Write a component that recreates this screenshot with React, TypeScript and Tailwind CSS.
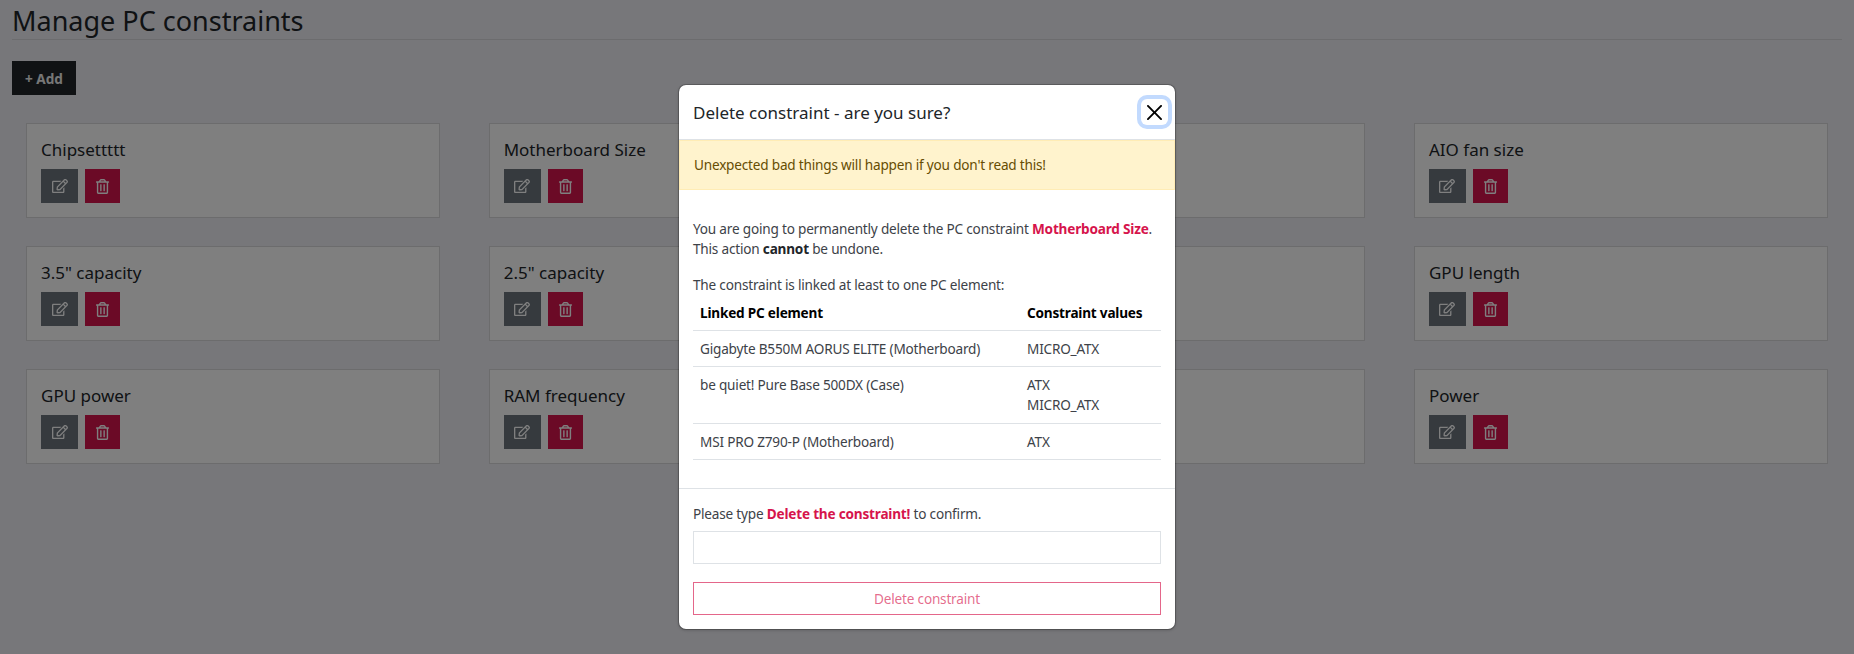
import { FaRegEdit, FaRegTrashAlt } from "react-icons/fa";

const constraints = [
  "Chipsettttt",
  "Motherboard Size",
  "CPU socket",
  "AIO fan size",
  '3.5" capacity',
  '2.5" capacity',
  "RAM type",
  "GPU length",
  "GPU power",
  "RAM frequency",
  "RAM size",
  "Power",
];

const linkedElements = [
  { name: "Gigabyte B550M AORUS ELITE (Motherboard)", values: ["MICRO_ATX"] },
  { name: "be quiet! Pure Base 500DX (Case)", values: ["ATX", "MICRO_ATX"] },
  { name: "MSI PRO Z790-P (Motherboard)", values: ["ATX"] },
];

export default function App() {
  return (
    <div className="relative h-[654px] overflow-hidden bg-[#eeeef4] font-['Noto_Sans',sans-serif] text-[13.6px] leading-[20.4px] text-[#212529]">
      {/* Page behind the modal */}
      <div className="px-3">
        <h1 className="h-10 border-b border-[#d8d8dc] pt-px text-[27px] leading-[40px] text-[#212529]">Manage PC constraints</h1>
        <button className="mt-[21px] flex h-[34px] w-16 items-center justify-center bg-[#212529] pt-[2px] text-[13.6px] font-bold text-[#eeeeee]">
          + Add
        </button>
        <div className="mt-7 grid grid-cols-4 gap-x-[48.67px] gap-y-7 px-[14px]">
          {constraints.map((name) => (
            <div key={name} className="h-[95px] border border-[#d8d8da] bg-white px-[14px] pt-[14px]">
              <h5 className="text-[17px] leading-[24px] text-[#212529]">{name}</h5>
              <div className="mt-[7px] flex gap-[7px]">
                <button className="flex h-[34px] w-[37px] items-center justify-center bg-[#6c757d] text-white">
                  <FaRegEdit size={16} />
                </button>
                <button className="flex h-[34px] w-[35px] items-center justify-center bg-[#d6144c] text-white">
                  <FaRegTrashAlt size={15} />
                </button>
              </div>
            </div>
          ))}
        </div>
      </div>

      {/* Backdrop */}
      <div className="absolute inset-0 bg-black/50" />

      {/* Modal */}
      <div className="absolute inset-0 flex justify-center pt-[84px]">
        <div className="h-[546px] w-[498px] rounded-lg border border-black/20 bg-white bg-clip-padding text-[#3d4248] shadow-sm">
          <div className="flex h-[55px] items-center justify-between border-b border-[#dee2e6] pl-[14px] pr-[7px]">
            <h5 className="pt-[2px] text-[17px] text-[#212529]">Delete constraint - are you sure?</h5>
            <button className="flex h-[26px] w-[27px] items-center justify-center rounded-md bg-white ring-4 ring-[#c2dafe]">
              <svg width="15" height="15" viewBox="0 0 16 16" fill="#000">
                <path d="M.293.293a1 1 0 0 1 1.414 0L8 6.586 14.293.293a1 1 0 1 1 1.414 1.414L9.414 8l6.293 6.293a1 1 0 0 1-1.414 1.414L8 9.414l-6.293 6.293a1 1 0 0 1-1.414-1.414L6.586 8 .293 1.707a1 1 0 0 1 0-1.414z" />
              </svg>
            </button>
          </div>
          <div className="flex h-[50px] items-center border border-[#ffecb5] bg-[#fff3cd] px-[14px] pt-px tracking-[-0.2px] text-[#664d03]">
            Unexpected bad things will happen if you don't read this!
          </div>
          <div className="h-[299px] border-b border-[#dee2e6] px-[14px] pt-[29px] tracking-[-0.2px]">
            <p>
              You are going to permanently delete the PC constraint{" "}
              <strong className="text-[#d6144c]">Motherboard Size</strong>.
              <br />
              This action <strong className="text-[#212529]">cannot</strong> be undone.
            </p>
            <p className="mt-[15px]">The constraint is linked at least to one PC element:</p>
            <table className="w-full border-collapse">
              <thead>
                <tr className="border-b border-[#dee2e6] text-left text-[#000]">
                  <th className="w-[326px] px-[7px] pb-[6px] pt-[8px] font-bold">Linked PC element</th>
                  <th className="whitespace-nowrap px-2 pb-[6px] pt-[8px] font-bold">Constraint values</th>
                </tr>
              </thead>
              <tbody>
                {linkedElements.map((row) => (
                  <tr key={row.name} className="border-b border-[#dee2e6] align-top">
                    <td className="px-[7px] pb-[7px] pt-[8px]">{row.name}</td>
                    <td className="px-2 pb-[7px] pt-[8px]">
                      {row.values.map((v) => (
                        <div key={v}>{v}</div>
                      ))}
                    </td>
                  </tr>
                ))}
              </tbody>
            </table>
          </div>
          <div className="px-[14px] pt-[15px] tracking-[-0.2px]">
            <p>
              Please type <strong className="text-[#d6144c]">Delete the constraint!</strong> to confirm.
            </p>
            <input className="mt-[7px] block h-[33px] w-full border border-[#dee2e6]" />
            <button className="mt-[18px] h-[33px] w-full border border-[#d6144c]/65 text-[#d6144c]/65">
              Delete constraint
            </button>
          </div>
        </div>
      </div>
    </div>
  );
}
